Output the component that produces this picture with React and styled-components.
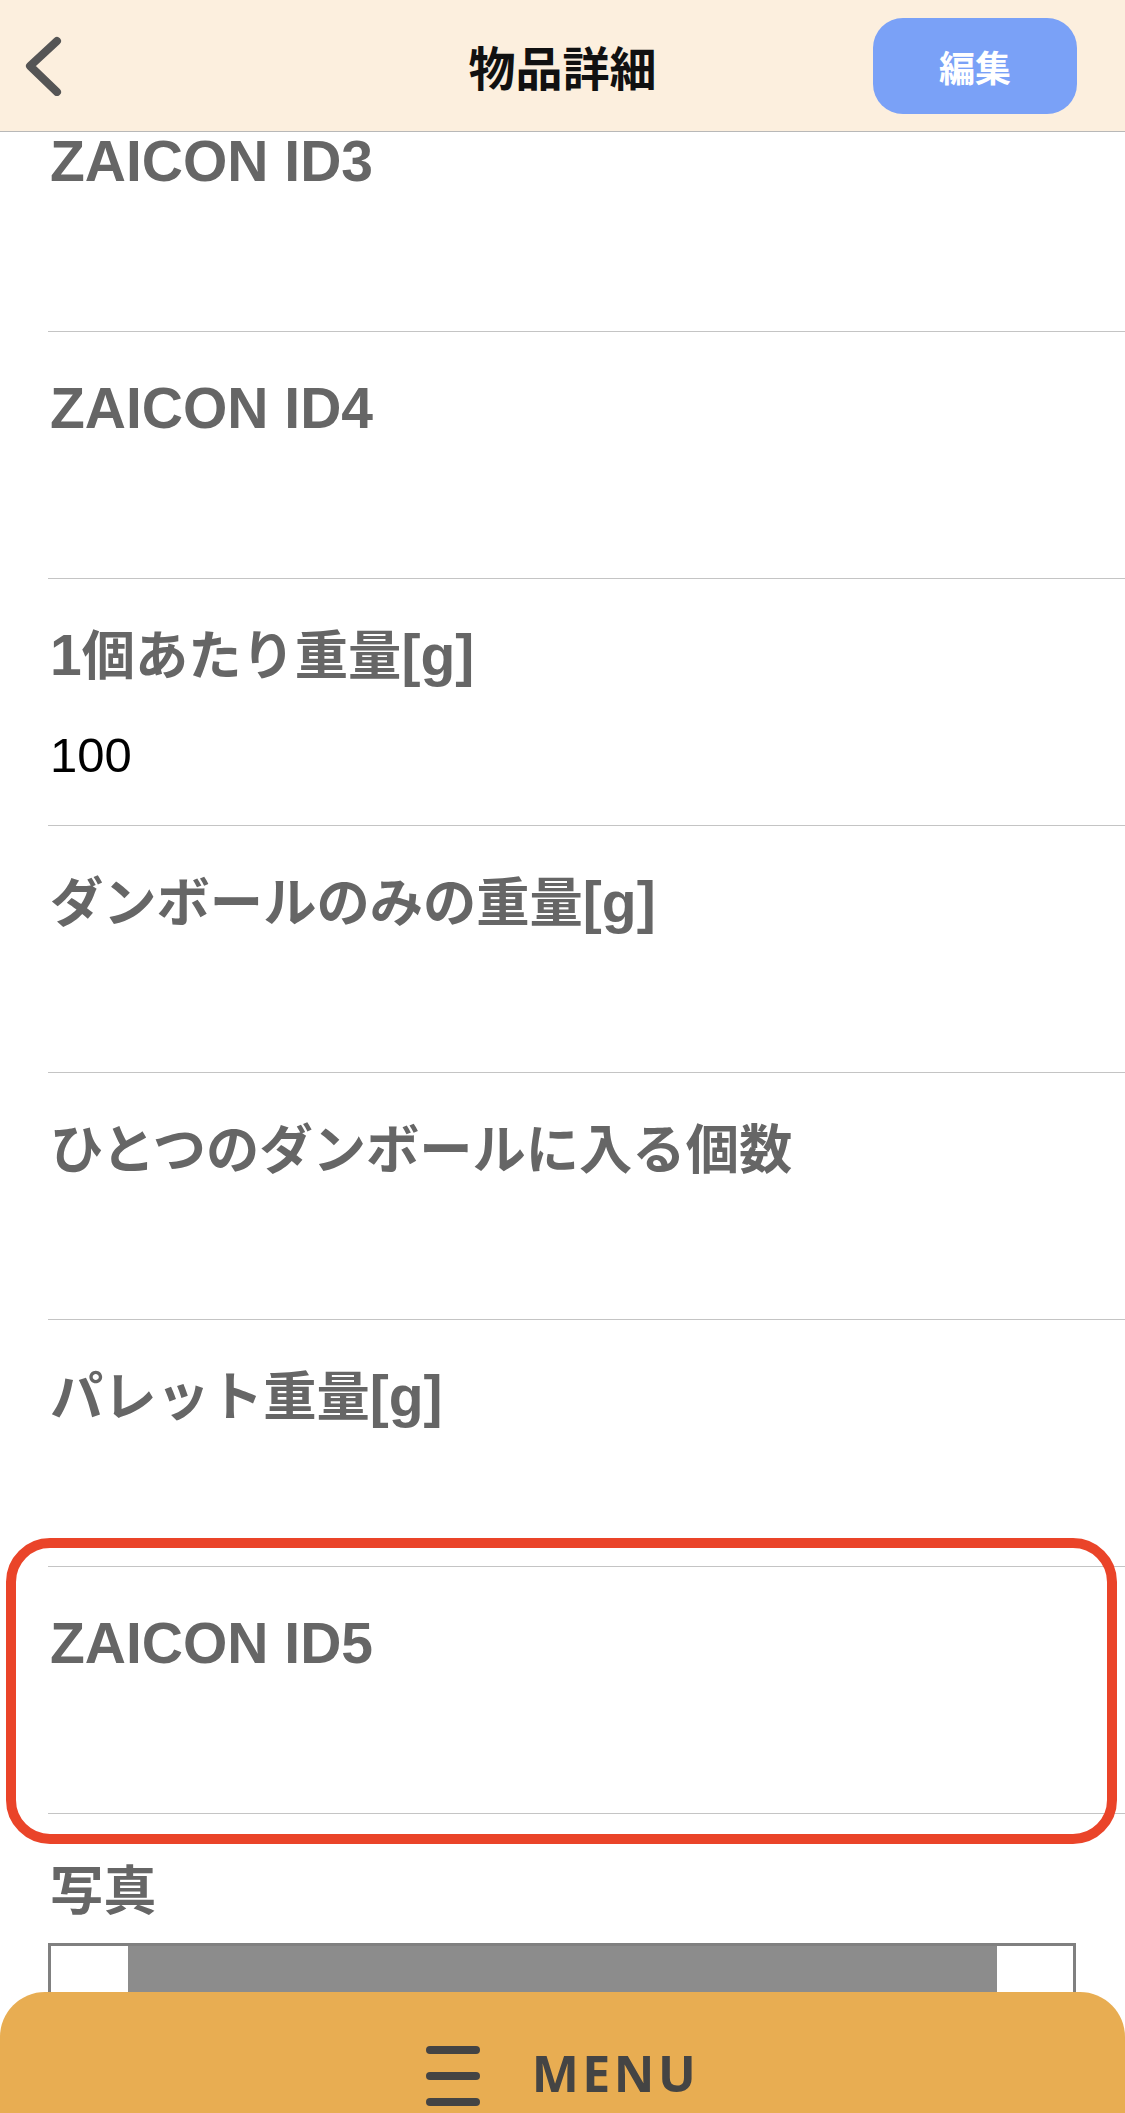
import React from "react";
import styled, { createGlobalStyle } from "styled-components";

const GlobalStyle = createGlobalStyle`
  html, body {
    margin: 0;
    padding: 0;
    background: #ffffff;
    overflow: hidden;
  }
  body {
    font-family: "Liberation Sans", "Noto Sans CJK JP", sans-serif;
  }
  * { box-sizing: border-box; }
`;

const Header = styled.header`
  position: fixed;
  top: 0;
  left: 0;
  right: 0;
  z-index: 10;
  height: 132px;
  background: #fcefde;
  border-bottom: 1px solid #b8b8b8;
  display: grid;
  grid-template-columns: 1fr auto 1fr;
  align-items: center;
`;

const BackButton = styled.button`
  justify-self: start;
  margin-left: 24px;
  padding: 0;
  border: none;
  background: transparent;
  display: flex;
  width: 40px;
  height: 60px;
`;

const Title = styled.h1`
  margin: 0;
  font-family: "Noto Sans CJK JP", sans-serif;
  font-weight: 700;
  font-size: 47px;
  line-height: 1;
  color: #111111;
`;

const EditButton = styled.button`
  justify-self: end;
  margin-right: 48px;
  width: 204px;
  height: 96px;
  border: none;
  border-radius: 30px;
  background: #7aa1f7;
  color: #ffffff;
  font-family: "Noto Sans CJK JP", sans-serif;
  font-weight: 700;
  font-size: 36px;
  line-height: 1;
  display: flex;
  align-items: center;
  justify-content: center;
`;

const Page = styled.main`
  padding-top: 84px;
`;

const Row = styled.section`
  position: relative;
  height: 247px;
  margin-left: 48px;
  padding: 41px 0 0 2px;
  border-top: 1px solid #c4c4c4;
  display: flex;
  flex-direction: column;
`;

const Label = styled.div`
  height: 70px;
  font-size: 57px;
  line-height: 70px;
  font-weight: 700;
  color: #666666;
  white-space: nowrap;
`;

const Jp = styled.span`
  font-family: "Noto Sans CJK JP", sans-serif;
  font-size: 0.935em;
  line-height: 1;
`;

const Value = styled.div`
  margin-top: 35px;
  height: 60px;
  font-size: 49px;
  line-height: 60px;
  font-weight: 400;
  color: #000000;
`;

const Highlight = styled.div`
  position: absolute;
  top: -29px;
  left: -42px;
  right: 8px;
  bottom: -31px;
  border: 10px solid #ea4429;
  border-radius: 44px;
  pointer-events: none;
  z-index: 2;
`;

const PhotoSection = styled.section`
  margin-left: 48px;
  padding: 41px 0 0 2px;
  border-top: 1px solid #c4c4c4;
`;

const PhotoFrame = styled.div`
  margin: 18px 0 0 -2px;
  width: 1028px;
  height: 168px;
  border: 3px solid #808080;
  padding: 0 76px 0 77px;
  background: #ffffff;
`;

const PhotoFill = styled.div`
  height: 100%;
  background: #8c8c8c;
`;

const MenuBar = styled.nav`
  position: fixed;
  left: 0;
  right: 0;
  bottom: 0;
  z-index: 10;
  height: 121px;
  background: #e8ad52;
  border-radius: 45px 45px 0 0;
  display: flex;
  justify-content: center;
  align-items: flex-start;
  gap: 52px;
  padding-top: 54px;
`;

const Burger = styled.div`
  width: 54px;
  height: 60px;
  display: flex;
  flex-direction: column;
  justify-content: space-between;
`;

const BurgerLine = styled.span`
  display: block;
  height: 8px;
  border-radius: 4px;
  background: #444444;
`;

const MenuText = styled.span`
  font-family: "Open Sans", sans-serif;
  font-weight: 700;
  font-size: 50px;
  line-height: 56px;
  margin-top: -1px;
  letter-spacing: 3.5px;
  color: #444444;
`;

const CJK = /([\u3000-\u30ff\u3400-\u9fff\uff00-\uffef]+)/;

function Mixed({ text }) {
  return text
    .split(CJK)
    .filter((p) => p.length > 0)
    .map((part, i) => (CJK.test(part) ? <Jp key={i}>{part}</Jp> : <React.Fragment key={i}>{part}</React.Fragment>));
}

const rows = [
  { label: "ZAICON ID3", value: "" },
  { label: "ZAICON ID4", value: "" },
  { label: "1個あたり重量[g]", value: "100" },
  { label: "ダンボールのみの重量[g]", value: "" },
  { label: "ひとつのダンボールに入る個数", value: "" },
  { label: "パレット重量[g]", value: "" },
  { label: "ZAICON ID5", value: "", highlighted: true },
];

export default function App() {
  return (
    <>
      <GlobalStyle />
      <Header>
        <BackButton aria-label="戻る">
          <svg width="40" height="60" viewBox="0 0 40 60" fill="none">
            <polyline
              points="33,5 6,30 33,56"
              stroke="#555555"
              strokeWidth="8"
              strokeLinecap="round"
              strokeLinejoin="round"
            />
          </svg>
        </BackButton>
        <Title>物品詳細</Title>
        <EditButton>編集</EditButton>
      </Header>
      <Page>
        {rows.map((r) => (
          <Row key={r.label}>
            <Label>
              <Mixed text={r.label} />
            </Label>
            <Value>{r.value}</Value>
            {r.highlighted && <Highlight />}
          </Row>
        ))}
        <PhotoSection>
          <Label>
            <Mixed text="写真" />
          </Label>
          <PhotoFrame>
            <PhotoFill />
          </PhotoFrame>
        </PhotoSection>
      </Page>
      <MenuBar>
        <Burger>
          <BurgerLine />
          <BurgerLine />
          <BurgerLine />
        </Burger>
        <MenuText>MENU</MenuText>
      </MenuBar>
    </>
  );
}
